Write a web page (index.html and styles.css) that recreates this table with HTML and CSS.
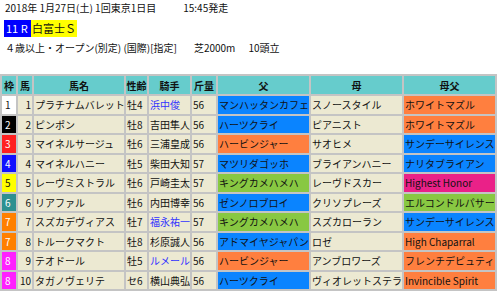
FILE: index.html
```html
<!DOCTYPE html>
<html lang="ja">
<head>
<meta charset="utf-8">
<link rel="stylesheet" href="styles.css">
</head>
<body>
<div class="date"><span>2018年 1月27日(土) 1回東京1日目</span><span class="time">15:45発走</span></div>
<div class="race"><span class="rno">11 R</span><span class="rname">白富士Ｓ</span></div>
<div class="cond"><span class="c1">４歳以上・オープン(別定) (国際)[指定]</span><span class="c2">芝2000m</span><span class="c3">10頭立</span></div>
<table class="entries">
<colgroup>
<col class="w-waku"><col class="w-uma"><col class="w-name"><col class="w-sex"><col class="w-jky"><col class="w-kg"><col class="w-f"><col class="w-m"><col class="w-mf">
</colgroup>
<thead>
<tr><th>枠</th><th>馬</th><th>馬名</th><th>性齢</th><th>騎手</th><th>斤量</th><th>父</th><th>母</th><th>母父</th></tr>
</thead>
<tbody>
<tr><td class="waku w1">1</td><td class="num">1</td><td>プラチナムバレット</td><td>牡4</td><td class="jb">浜中俊</td><td>56</td><td class="cb">マンハッタンカフェ</td><td>スノースタイル</td><td class="co">ホワイトマズル</td></tr>
<tr><td class="waku w2">2</td><td class="num">2</td><td>ピンポン</td><td>牡8</td><td>吉田隼人</td><td>56</td><td class="cb">ハーツクライ</td><td>ピアニスト</td><td class="co">ホワイトマズル</td></tr>
<tr><td class="waku w3">3</td><td class="num">3</td><td>マイネルサージュ</td><td>牡6</td><td>三浦皇成</td><td>56</td><td class="co">ハービンジャー</td><td>サオヒメ</td><td class="cb">サンデーサイレンス</td></tr>
<tr><td class="waku w4">4</td><td class="num">4</td><td>マイネルハニー</td><td>牡5</td><td>柴田大知</td><td>57</td><td class="cb">マツリダゴッホ</td><td>ブライアンハニー</td><td class="cb">ナリタブライアン</td></tr>
<tr><td class="waku w5">5</td><td class="num">5</td><td>レーヴミストラル</td><td>牡6</td><td>戸崎圭太</td><td>57</td><td class="cg">キングカメハメハ</td><td>レーヴドスカー</td><td class="cp">Highest Honor</td></tr>
<tr><td class="waku w6">6</td><td class="num">6</td><td>リアファル</td><td>牡6</td><td>内田博幸</td><td>56</td><td class="cb">ゼンノロブロイ</td><td>クリソプレーズ</td><td class="cg">エルコンドルパサー</td></tr>
<tr><td class="waku w7">7</td><td class="num">7</td><td>スズカデヴィアス</td><td>牡7</td><td class="jb">福永祐一</td><td>57</td><td class="cg">キングカメハメハ</td><td>スズカローラン</td><td class="cb">サンデーサイレンス</td></tr>
<tr><td class="waku w7">7</td><td class="num">8</td><td>トルークマクト</td><td>牡8</td><td>杉原誠人</td><td>56</td><td class="cb">アドマイヤジャパン</td><td>ロゼ</td><td class="co">High Chaparral</td></tr>
<tr><td class="waku w8">8</td><td class="num">9</td><td>テオドール</td><td>牡5</td><td class="jb">ルメール</td><td>56</td><td class="co">ハービンジャー</td><td>アンブロワーズ</td><td class="co">フレンチデピュティ</td></tr>
<tr><td class="waku w8">8</td><td class="num">10</td><td>タガノヴェリテ</td><td>セ6</td><td>横山典弘</td><td>56</td><td class="cb">ハーツクライ</td><td>ヴィオレットステラ</td><td class="co">Invincible Spirit</td></tr>
</tbody>
</table>
</body>
</html>
```

FILE: styles.css
```css
html, body {
  margin: 0;
  padding: 0;
  background: #ffffff;
}
body {
  font-family: "Noto Sans CJK JP", sans-serif;
  font-size: 10px;
  color: #111111;
  padding: 1px 0 0 0;
}
.date {
  height: 14px;
  line-height: 14px;
  padding-left: 5px;
  display: flex;
  white-space: nowrap;
}
.date .time {
  margin-left: 27px;
}
.race {
  margin-top: 5px;
  margin-left: 4px;
  height: 17px;
  display: flex;
  font-size: 11px;
  line-height: 17px;
  white-space: nowrap;
}
.rno {
  background: #0000ff;
  color: #ffffff;
  width: 27px;
  padding-left: 2px;
  box-sizing: border-box;
}
.rname {
  background: #ffff00;
  color: #111111;
  padding: 0 1px 0 1px;
}
.cond {
  margin-top: 4px;
  height: 14px;
  line-height: 14px;
  padding-left: 5px;
  display: flex;
  white-space: nowrap;
}
.cond .c2 {
  margin-left: 17px;
}
.cond .c3 {
  margin-left: 13px;
}
.entries {
  margin-top: 19px;
  margin-left: 0;
  border-collapse: separate;
  border-spacing: 2px;
  table-layout: fixed;
  width: 497px;
  background: #c4c4c4;
  font-size: 10px;
}
.w-waku { width: 14px; }
.w-uma { width: 14px; }
.w-name { width: 90px; }
.w-sex { width: 21px; }
.w-jky { width: 41px; }
.w-kg { width: 24px; }
.w-f { width: 91px; }
.w-m { width: 91px; }
.w-mf { width: 91px; }
.entries th,
.entries td {
  padding: 0 0 0 1px;
  white-space: nowrap;
  overflow: hidden;
  text-align: left;
  line-height: 17px;
}
.entries th {
  background: #66cccc;
  height: 18px;
  font-weight: bold;
  text-align: center;
  padding: 0;
}
.entries td {
  background: #ece9d2;
  height: 17.5px;
}
.entries td.num {
  text-align: right;
  padding: 0 1px 0 0;
}
.entries td.waku {
  padding-left: 3px;
  color: #ffffff;
}
.entries td.w1 { background: #ffffff; color: #111111; }
.entries td.w2 { background: #000000; }
.entries td.w3 { background: #ff2020; }
.entries td.w4 { background: #1010ff; }
.entries td.w5 { background: #ffff00; color: #111111; }
.entries td.w6 { background: #2e9090; }
.entries td.w7 { background: #ff8000; }
.entries td.w8 { background: #ff20ff; }
.entries td.jb { color: #3333ff; }
.entries td.cb { background: #0a84ff; }
.entries td.co { background: #ff7f3f; }
.entries td.cg { background: #88c842; }
.entries td.cp { background: #ea2188; }
```
